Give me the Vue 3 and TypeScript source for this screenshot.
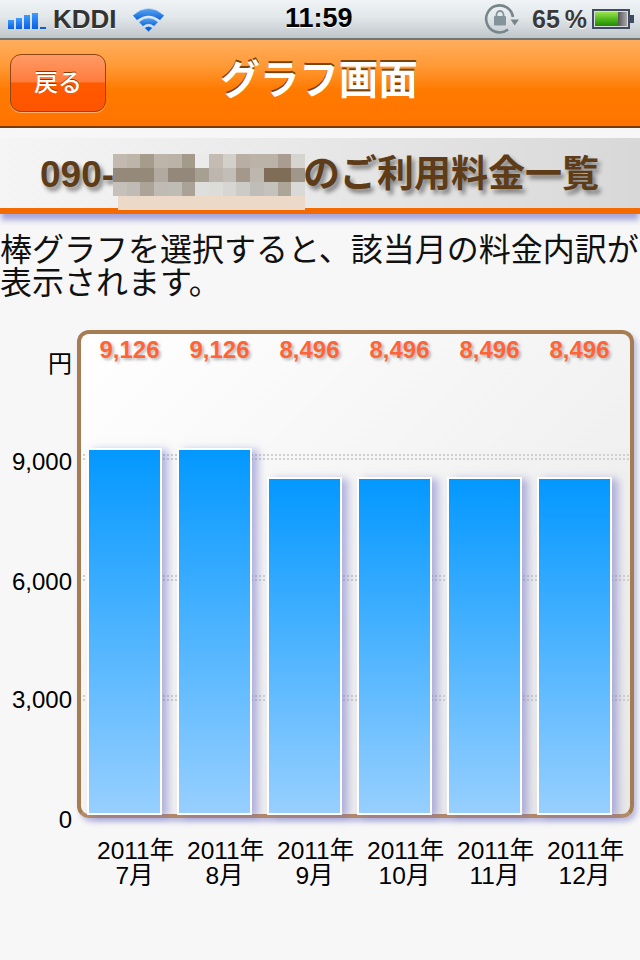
<script setup lang="ts">
interface Bar { value: string; year: string; month: string; tall: boolean }
const bars: Bar[] = [
  { value: '9,126', year: '2011年', month: '7月', tall: true },
  { value: '9,126', year: '2011年', month: '8月', tall: true },
  { value: '8,496', year: '2011年', month: '9月', tall: false },
  { value: '8,496', year: '2011年', month: '10月', tall: false },
  { value: '8,496', year: '2011年', month: '11月', tall: false },
  { value: '8,496', year: '2011年', month: '12月', tall: false },
]
const axis = [
  { label: '9,000', cls: 'a9' },
  { label: '6,000', cls: 'a6' },
  { label: '3,000', cls: 'a3' },
]
const mosaic: string[] = [
  '#c2bab0','#bdb5aa','#a69c8c','#bdb5aa','#bbb3a8','#a39a8a','#ebebeb','#c4bcb2','#d3d0ca','#b8aea4','#bbb2a8','#bbb2a8','#a89d90','#d6d4cf',
  '#95897a','#95897a','#95897a','#b2aaa0','#94887a','#94887a','#a89f93','#bdb6ae','#c2bdb6','#a3988a','#bdb7b0','#7f6d58','#7f6d58','#a0968a',
  '#c5c1ba','#c0bcb5','#aca498','#bfbbb4','#bfbbb5','#aaa297','#dededf','#dcdcd9','#d7d6d4','#cdcbc6','#c0bcb7','#c4c2bc','#ada598','#d9d9d8',
]
const signal = [9, 11, 14, 16]
</script>

<template>
  <div class="page">
    <div class="status">
      <div class="st-left">
        <div class="signal">
          <i v-for="h in signal" :key="h" class="sig" :style="{ height: h + 'px' }"></i>
          <i class="sig-low"></i>
        </div>
        <span class="carrier">KDDI</span>
        <svg class="wifi" width="33" height="25" viewBox="0 0 33 25">
          <defs>
            <linearGradient id="wf" x1="0" y1="0" x2="0" y2="1">
              <stop offset="0" stop-color="#5ea6ee"/>
              <stop offset="1" stop-color="#0a62dc"/>
            </linearGradient>
          </defs>
          <path d="M0.500 8.500 Q16.500 -6 32.500 8.500 L28 13.500 Q16.500 4.500 5 13.500 Z" fill="url(#wf)" stroke="#f4f8fb" stroke-width=".6"/>
          <path d="M6.500 15 Q16.500 6.500 26.500 15 L22 19.500 Q16.500 15 11 19.500 Z" fill="url(#wf)" stroke="#f4f8fb" stroke-width=".6"/>
          <path d="M12.300 21 Q16.500 17.500 20.700 21 L16.500 25 Z" fill="#0a62dc" stroke="#f4f8fb" stroke-width=".6"/>
        </svg>
      </div>
      <span class="clock">11:59</span>
      <div class="st-right">
        <svg class="lock" width="36" height="32" viewBox="0 0 36 32">
          <path d="M29 14 A13.500 13.500 0 1 0 24 26.500" fill="none" stroke="#78868c" stroke-width="2.600"/>
          <path d="M26.500 16.500 H35 L30.700 22.500 Z" fill="#78868c"/>
          <rect x="10" y="13" width="12" height="9.500" rx="1" fill="#83949a"/>
          <path d="M12.500 13 V11.500 a3.500 3.500 0 0 1 7 0 V13" fill="none" stroke="#83949a" stroke-width="1.800"/>
        </svg>
        <span class="pct">65 %</span>
        <div class="battery"><div class="bat-fill"></div><div class="bat-rest"></div></div>
        <i class="nub"></i>
      </div>
    </div>

    <div class="nav">
      <button class="back">戻る</button>
      <h1 class="title">グラフ画面</h1>
    </div>

    <div class="band">
      <span class="num first">090-</span>
      <div class="mosaic">
        <i v-for="(c, i) in mosaic" :key="i" :style="{ background: c }"></i>
      </div>
      <span class="num rest">のご利用料金一覧</span>
      <div class="peach"></div>
    </div>

    <p class="desc">棒グラフを選択すると、該当月の料金内訳が<br>表示されます。</p>

    <div class="chart">
      <div class="yaxis">
        <span class="yen">円</span>
        <span v-for="a in axis" :key="a.label" class="tick" :class="a.cls">{{ a.label }}</span>
        <span class="tick a0">0</span>
      </div>
      <div class="col-main">
        <div class="frame">
          <i class="grid g9"></i>
          <i class="grid g6"></i>
          <i class="grid g3"></i>
          <div class="bars">
            <div v-for="(b, i) in bars" :key="i" class="slot">
              <span class="val">{{ b.value }}</span>
              <div class="bar" :class="{ tall: b.tall }"></div>
            </div>
          </div>
        </div>
        <div class="xaxis">
          <div v-for="(b, i) in bars" :key="i" class="xlabel">{{ b.year }}<br>{{ b.month }}</div>
        </div>
      </div>
    </div>
  </div>
</template>

<style scoped>
.page { width: 640px; height: 960px; background: #f7f7f7; overflow: hidden; font-family: "Liberation Sans", "Noto Sans CJK JP", sans-serif; color: #000; }

.status { height: 40px; box-sizing: border-box; border-bottom: 2px solid #6e7478; background: linear-gradient(#f0f4f7, #e2e7ea 45%, #bfc6ca); display: flex; align-items: center; justify-content: space-between; position: relative; }
.st-left { display: flex; align-items: center; padding-left: 8px; }
.signal { display: flex; align-items: flex-end; gap: 2px; height: 16px; width: 38px; margin-top: 4px; }
.sig { width: 6px; background: linear-gradient(#3f9bff, #0a5fe0); display: block; }
.sig-low { width: 6px; height: 2px; background: #0a5fe0; display: block; }
.carrier { font-size: 26px; font-weight: 700; color: #333; margin-left: 7px; text-shadow: 0 1px 0 #fff; }
.wifi { margin-left: 15px; margin-top: 1px; }
.clock { position: absolute; left: 285px; top: 3px; font-size: 27px; font-weight: 700; color: #000; text-shadow: 0 1px 0 #fff; }
.st-right { display: flex; align-items: center; padding-right: 6px; }
.lock { margin-right: -1px; }
.pct { font-size: 25px; font-weight: 700; color: #3a3a3a; margin-left: 13px; word-spacing: -2px; text-shadow: 0 1px 0 #fff; }
.battery { width: 38px; height: 20px; box-sizing: border-box; border: 2px solid #3f4b60; margin-left: 5px; display: flex; padding: 1px; background: #d9dcde; }
.bat-fill { width: 23px; background: linear-gradient(#9be34f, #52b81c 50%, #1e8a08); }
.bat-rest { flex: 1; background: linear-gradient(90deg, #555, #aaa); }
.nub { display: block; width: 4px; height: 8px; background: #3f4b60; }

.nav { height: 88px; box-sizing: border-box; border-bottom: 2px solid #7a3a00; background: linear-gradient(#ffae5e, #ff9a36 30%, #ff7a00 58%, #ff7400); display: flex; align-items: center; position: relative; padding-left: 10px; }
.back { width: 96px; height: 58px; padding: 0 0 5px; border: 1.500px solid #8f4716; border-radius: 11px; background: linear-gradient(#ff9a66, #ff7c3c 48%, #ff5a00 50%, #ff5400); color: #fff; font-size: 24px; font-family: inherit; font-weight: 500; text-shadow: 0 -1px 0 #8a3a00; box-shadow: 0 1px 0 #ffb070; }
.title { position: absolute; left: -1px; right: 1px; top: 14px; margin: 0; text-align: center; font-size: 39.500px; line-height: 52px; font-weight: 700; color: #fff; text-shadow: 0 -2px 0 #7a4410; }

.band { margin-top: 10px; height: 76px; box-sizing: border-box; border-bottom: 6px solid #f26a00; background: linear-gradient(90deg, #f5f5f5, #e9e9e9 45%, #d8d8d8); box-shadow: 0 7px 6px -1px rgba(110, 110, 200, .6); display: flex; align-items: center; padding-left: 40px; position: relative; }
.num { font-size: 37px; font-weight: 700; color: #5e3c17; text-shadow: 3px 4px 4px rgba(0, 0, 0, .45); line-height: 70px; white-space: nowrap; padding-top: 4px; }
.first { width: 73px; flex: none; overflow: visible; }
.rest { margin-left: -2px; }
.mosaic { width: 192px; flex: none; height: 42px; margin-top: 4px; display: grid; grid-template-columns: repeat(14, 1fr); grid-template-rows: repeat(3, 14px); position: relative; z-index: 1; }
.mosaic i { display: block; }
.peach { position: absolute; left: 118px; top: 58px; width: 187px; height: 14px; background: #ecd9c8; z-index: 1; }

.desc { margin: 20px 0 0; font-size: 32px; line-height: 33px; white-space: nowrap; color: #111; }

.chart { margin-top: 30px; display: flex; }
.yaxis { width: 77px; height: 488px; position: relative; font-size: 24px; }
.yen { position: absolute; right: 5px; top: 14px; }
.tick { position: absolute; right: 5px; line-height: 28px; }
.a9 { top: 118px; }
.a6 { top: 238px; }
.a3 { top: 356px; }
.a0 { top: 476px; }
.col-main { width: 557px; }
.frame { height: 488px; box-sizing: border-box; border: 4px solid #a67c52; border-bottom-color: #b58a66; border-radius: 12px; background: linear-gradient(135deg, #fff, #e8e8e8); position: relative; box-shadow: 3px 4px 5px rgba(120, 120, 200, .45); }
.grid { position: absolute; left: 0; right: 0; height: 6px; background-image: conic-gradient(#d0d0d0 25%, transparent 0); background-size: 4px 4px; }
.g9 { top: 120px; }
.g6 { top: 241px; }
.g3 { top: 361px; }
.bars { position: absolute; inset: 0; display: flex; gap: 15px; padding-left: 6px; }
.slot { width: 75px; position: relative; display: flex; flex-direction: column; justify-content: flex-end; }
.val { position: absolute; left: -5px; right: -15px; top: 2px; text-align: center; font-size: 24px; line-height: 28px; font-weight: 700; color: #ff6436; text-shadow: 2px 2px 3px rgba(0, 0, 0, .28); }
.bar { height: 338px; margin-bottom: -1px; box-sizing: border-box; border: 2px solid #fff; background: linear-gradient(#0398ff, #97cfff); box-shadow: 6px 2px 8px rgba(110, 110, 200, .5); }
.tall { height: 367px; }
.xaxis { display: flex; gap: 15px; padding-left: 20px; margin-top: 20px; }
.xlabel { width: 75px; flex: none; text-align: center; font-size: 24.500px; line-height: 25px; white-space: nowrap; }
</style>
